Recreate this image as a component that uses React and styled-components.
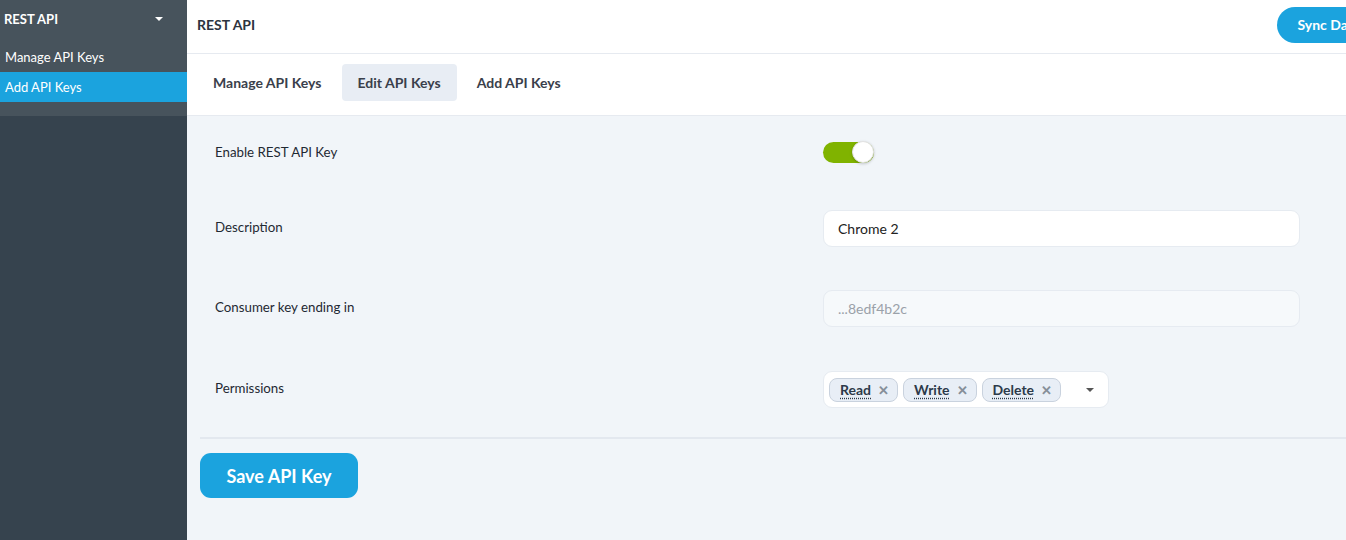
import styled, { createGlobalStyle } from "styled-components";

const GlobalStyle = createGlobalStyle`
  html, body {
    margin: 0;
    padding: 0;
    overflow: hidden;
    background: #f1f5f9;
  }
  body {
    font-family: Lato, "Open Sans", "Liberation Sans", sans-serif;
    font-size: 13px;
    color: #1f2933;
  }
  * { box-sizing: border-box; }
`;

const Page = styled.div`
  display: flex;
  width: 1346px;
  height: 540px;
  overflow: hidden;
`;

const Sidebar = styled.aside`
  width: 187px;
  flex-shrink: 0;
  background: #36434e;
`;

const SideMenu = styled.div`
  background: #47535c;
  padding-bottom: 14px;
`;

const SideHead = styled.div`
  display: flex;
  align-items: center;
  justify-content: space-between;
  height: 38px;
  margin-bottom: 4px;
  padding: 0 24px 0 4px;
  color: #fff;
  font-weight: 700;
  font-size: 13px;
`;

const Caret = styled.span`
  width: 0;
  height: 0;
  border-left: ${({ size }) => size}px solid transparent;
  border-right: ${({ size }) => size}px solid transparent;
  border-top: ${({ size }) => size}px solid ${({ color }) => color};
`;

const SideItem = styled.div`
  height: 30px;
  display: flex;
  align-items: center;
  padding-left: 5px;
  color: #fff;
  font-size: 13px;
  background: ${({ active }) => (active ? "#1ba3de" : "transparent")};
`;

const Main = styled.main`
  flex: 1;
  min-width: 0;
  display: flex;
  flex-direction: column;
`;

const Header = styled.header`
  height: 54px;
  background: #fff;
  border-bottom: 1px solid #e6eaf0;
  display: flex;
  align-items: flex-start;
  padding: 7px 0 0 10px;
  color: #2c3440;
`;

const Title = styled.h1`
  margin: 9px 0 0;
  font-size: 14px;
  font-weight: 700;
  flex: 1;
`;

const SyncButton = styled.button`
  height: 36px;
  flex-shrink: 0;
  margin-right: -34px;
  padding: 0 20px 2px;
  border: none;
  border-radius: 18px;
  background: #1ba3de;
  color: #fff;
  font-family: inherit;
  font-size: 14px;
  font-weight: 700;
`;

const TabBar = styled.nav`
  height: 62px;
  background: #fff;
  border-bottom: 1px solid #e6eaf0;
  display: flex;
  align-items: center;
  gap: 4px;
  padding: 0 10px 4px;
`;

const Tab = styled.div`
  height: 37px;
  display: flex;
  align-items: center;
  padding: 0 16px;
  border-radius: 4px;
  font-size: 14px;
  font-weight: 700;
  color: #3a404b;
  background: ${({ active }) => (active ? "#e8edf4" : "transparent")};
`;

const Content = styled.section`
  flex: 1;
  padding: 0 0 0 13px;
`;

const Form = styled.div`
  padding-bottom: 13px;
  border-bottom: 2px solid #e3e8ef;
`;

const Row = styled.div`
  display: grid;
  grid-template-columns: 621px 1fr;
  grid-auto-rows: 37px;
  align-items: center;
  padding: ${({ top }) => top}px 15px ${({ bottom }) => bottom}px 2px;
`;

const Label = styled.div`
  padding-left: 13px;
  font-size: 13.3px;
  margin-top: -4px;
  color: #1f2933;
`;

const Toggle = styled.div`
  position: relative;
  width: 51px;
  height: 21px;
  border-radius: 11px;
  background: #80b300;
  margin-top: -2px;
`;

const Knob = styled.span`
  position: absolute;
  right: 0;
  top: -1px;
  width: 22px;
  height: 22px;
  border-radius: 50%;
  background: #fff;
  border: 1px solid #e2e2e2;
  box-shadow: 0 1px 3px rgba(0, 0, 0, 0.2);
`;

const Field = styled.div`
  width: ${({ w }) => w}px;
  height: 37px;
  border-radius: 9px;
  border: 1px solid #e6ebf1;
  background: ${({ disabled }) => (disabled ? "#f6f9fb" : "#fff")};
  color: ${({ disabled }) => (disabled ? "#9aa1a9" : "#222")};
  display: flex;
  align-items: center;
  padding: 0 14px;
  font-size: 14px;
`;

const Select = styled(Field)`
  padding: 0 10px 0 5px;
  gap: 5px;
`;

const Chip = styled.span`
  height: 24px;
  display: inline-flex;
  align-items: center;
  gap: 7px;
  padding: 0 8px 0 10px;
  border-radius: 8px;
  border: 1px solid #c9d2de;
  background: #e8eef6;
  font-size: 14px;
  font-weight: 700;
  color: #2d3a4a;

  u {
    text-decoration: underline dotted;
    text-underline-offset: 3px;
  }
`;

const Remove = styled.span`
  color: #868f99;
  font-size: 13px;
  font-weight: 700;
`;

const SelectCaret = styled.span`
  margin-left: auto;
  margin-right: 4px;
  display: flex;
`;

const SaveButton = styled.button`
  margin-top: 14px;
  width: 158px;
  height: 45px;
  border: none;
  border-radius: 11px;
  background: #1ba3de;
  color: #fff;
  font-family: inherit;
  font-size: 18px;
  font-weight: 700;
`;

const perms = ["Read", "Write", "Delete"];

export default function App() {
  return (
    <>
      <GlobalStyle />
      <Page>
        <Sidebar>
          <SideMenu>
            <SideHead>
              REST API
              <Caret size={4} color="#fff" />
            </SideHead>
            <SideItem>Manage API Keys</SideItem>
            <SideItem active>Add API Keys</SideItem>
          </SideMenu>
        </Sidebar>
        <Main>
          <Header>
            <Title>REST API</Title>
            <SyncButton>Sync Data</SyncButton>
          </Header>
          <TabBar>
            <Tab>Manage API Keys</Tab>
            <Tab active>Edit API Keys</Tab>
            <Tab>Add API Keys</Tab>
          </TabBar>
          <Content>
            <Form>
              <Row top={19} bottom={19}>
                <Label>Enable REST API Key</Label>
                <Toggle>
                  <Knob />
                </Toggle>
              </Row>
              <Row top={19} bottom={21}>
                <Label>Description</Label>
                <Field w={477}>Chrome 2</Field>
              </Row>
              <Row top={22} bottom={22}>
                <Label>Consumer key ending in</Label>
                <Field w={477} disabled>
                  ...8edf4b2c
                </Field>
              </Row>
              <Row top={22} bottom={16}>
                <Label>Permissions</Label>
                <Select w={286}>
                  {perms.map((p) => (
                    <Chip key={p}>
                      <u>{p}</u>
                      <Remove>✕</Remove>
                    </Chip>
                  ))}
                  <SelectCaret>
                    <Caret size={4} color="#555" />
                  </SelectCaret>
                </Select>
              </Row>
            </Form>
            <SaveButton>Save API Key</SaveButton>
          </Content>
        </Main>
      </Page>
    </>
  );
}
